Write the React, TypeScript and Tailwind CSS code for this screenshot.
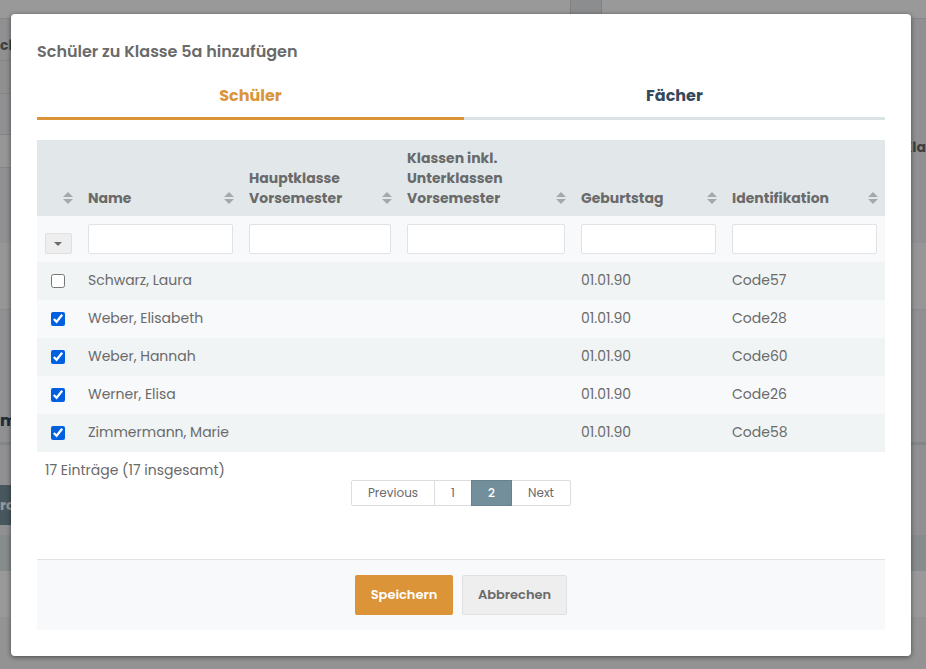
import { useState } from "react";
import clsx from "clsx";

const columns = [
  { label: "Name", width: "w-[161px]" },
  { label: "Hauptklasse Vorsemester", width: "w-[158px]" },
  { label: "Klassen inkl. Unterklassen Vorsemester", width: "w-[174px]" },
  { label: "Geburtstag", width: "w-[151px]" },
  { label: "Identifikation", width: "w-[161px]" },
];

const initialStudents = [
  { name: "Schwarz, Laura", birthday: "01.01.90", code: "Code57", checked: false },
  { name: "Weber, Elisabeth", birthday: "01.01.90", code: "Code28", checked: true },
  { name: "Weber, Hannah", birthday: "01.01.90", code: "Code60", checked: true },
  { name: "Werner, Elisa", birthday: "01.01.90", code: "Code26", checked: true },
  { name: "Zimmermann, Marie", birthday: "01.01.90", code: "Code58", checked: true },
];

function SortIcon() {
  return (
    <svg viewBox="0 0 10 12" className="h-3 w-[10px] shrink-0 fill-[#a6a9ac]" aria-hidden="true">
      <path d="M5 0L10 5H0Z" />
      <path d="M5 12L0 7H10Z" />
    </svg>
  );
}

// The class page that stays visible around the dialog
function PageBehind() {
  return (
    <div className="flex min-h-screen flex-col overflow-hidden bg-[#f5f5f5] text-sm font-bold text-[#6a6a6a]" aria-hidden="true">
      <div className="flex h-[19px] border-b border-[#e0e0e0] bg-white">
        <div className="ml-[570px] w-8 border-x border-[#d5d7da] bg-[#e9ebee]" />
      </div>
      <div className="flex h-[224px] justify-between bg-[#f0f1f4]">
        <div className="w-11">
          <div className="flex h-[42px] items-center border-b border-[#dcdcdc] pt-[10px]">ch</div>
          <div className="h-[33px] border-b border-[#dcdcdc] bg-[#eeeeee]" />
          <div className="h-[41px] border-b border-[#dcdcdc]" />
          <div className="h-[33px] border-b border-[#dcdcdc] bg-[#fbfbfb]" />
        </div>
        <div className="pt-[118px]">Kla</div>
      </div>
      <div className="h-[67px] border-b border-[#e6e7ea] bg-[#fbfbfb]" />
      <div className="flex h-[135px] flex-col justify-end border-b-3 border-[#dbe0e2] bg-[#f0f1f4] pb-[9px] text-base text-[#34495e]">
        m
      </div>
      <div className="h-[90px] bg-[#f0f1f4] pt-10">
        <div className="flex h-10 w-16 items-center bg-[#78919c] text-white">ro</div>
      </div>
      <div className="h-9 bg-[#e1e8ea]" />
      <div className="h-[46px] bg-white" />
    </div>
  );
}

function StudentTable() {
  const [students, setStudents] = useState(initialStudents);

  const toggle = (name: string) =>
    setStudents(students.map((s) => (s.name === name ? { ...s, checked: !s.checked } : s)));

  return (
    <table className="w-full table-fixed text-left text-sm">
      <thead>
        <tr className="bg-[#e2e8ea] align-bottom">
          <th className="w-[43px] py-2 pr-[7px]">
            <div className="flex h-5 items-center justify-end">
              <SortIcon />
            </div>
          </th>
          {columns.map((col) => (
            <th key={col.label} className={clsx("py-2 pr-[7px] pl-2 leading-5 font-bold", col.width)}>
              <div className="flex items-end justify-between">
                <span className="max-w-[110px]">{col.label}</span>
                <span className="flex h-5 items-center">
                  <SortIcon />
                </span>
              </div>
            </th>
          ))}
        </tr>
        <tr className="bg-[#f8f9fb]">
          <td className="h-[46px] pt-2 pl-2">
            <button
              type="button"
              aria-label="Auswahl"
              className="flex h-[21px] w-[27px] items-center justify-center rounded-xs border border-[#e0e0e0] bg-[#eeeeee] pt-px pr-[2px]"
            >
              <svg viewBox="0 0 8 4" className="h-1 w-2 fill-[#6a6a6a]">
                <path d="M0 0H8L4 4Z" />
              </svg>
            </button>
          </td>
          {columns.map((col) => (
            <td key={col.label} className="h-[46px] px-2">
              <input
                type="text"
                aria-label={`${col.label} filtern`}
                className="block h-[30px] w-full rounded-xs border border-[#e0e2e5] bg-white px-2 outline-none"
              />
            </td>
          ))}
        </tr>
      </thead>
      <tbody>
        {students.map((s) => (
          <tr key={s.name} className="h-[38px] odd:bg-[#f0f4f5] even:bg-[#f8f9fb]">
            <td className="pl-[14px]">
              <input
                type="checkbox"
                aria-label={s.name}
                checked={s.checked}
                onChange={() => toggle(s.name)}
                className="block size-[14px] accent-[#0060df]"
              />
            </td>
            <td className="px-2 pb-[2px]">{s.name}</td>
            <td />
            <td />
            <td className="px-2 pb-[2px]">{s.birthday}</td>
            <td className="px-2 pb-[2px]">{s.code}</td>
          </tr>
        ))}
      </tbody>
    </table>
  );
}

function Pagination() {
  const link = "h-[26px] border border-[#dddddd] bg-white";

  return (
    <nav className="flex justify-center text-xs" aria-label="Seiten">
      <button type="button" className={clsx(link, "w-[84px] rounded-l-xs")}>Previous</button>
      <button type="button" className={clsx(link, "-ml-px w-[38px]")}>1</button>
      <button type="button" aria-current="page" className="z-10 -ml-px h-[26px] w-[41px] border border-[#67828d] bg-[#738f9b] font-medium text-white">
        2
      </button>
      <button type="button" className={clsx(link, "-ml-px w-[60px] rounded-r-xs")}>Next</button>
    </nav>
  );
}

export default function App() {
  const [tab, setTab] = useState("Schüler");

  return (
    <div className="relative min-h-screen font-['Poppins','Inter',sans-serif] text-[#6a6a6a]">
      <PageBehind />
      <div className="absolute inset-0 bg-black/40 pt-[14px] pr-[15px] pl-[11px]">
        <div role="dialog" aria-label="Schüler zu Klasse 5a hinzufügen" className="rounded-sm bg-white p-[26px] shadow-[0_1px_5px_rgba(0,0,0,0.5)]">
          <h1 className="text-base leading-6 font-semibold">Schüler zu Klasse 5a hinzufügen</h1>

          <div role="tablist" className="mt-2 mb-5 flex">
            {["Schüler", "Fächer"].map((name) => (
              <button
                key={name}
                type="button"
                role="tab"
                aria-selected={tab === name}
                onClick={() => setTab(name)}
                className={clsx(
                  "h-12 flex-auto border-b-3 pt-[2px] text-base font-bold",
                  tab === name ? "border-[#dc9439] text-[#dc9439]" : "border-[#dbe3e5] text-[#34495e]"
                )}
              >
                {name}
              </button>
            ))}
          </div>

          <StudentTable />

          <p className="mt-2 pl-2 text-sm leading-5">17 Einträge (17 insgesamt)</p>
          <Pagination />

          <div className="mt-[53px] flex justify-center gap-[9px] border-t border-[#e0e2e5] bg-[#f8f9fb] py-[15px] text-[13px] font-semibold">
            <button type="button" className="h-10 w-[98px] rounded-xs bg-[#dc9439] text-white">Speichern</button>
            <button type="button" className="h-10 w-[105px] rounded-xs border border-[#e0e0e0] bg-[#eeeeee]">Abbrechen</button>
          </div>
        </div>
      </div>
    </div>
  );
}
